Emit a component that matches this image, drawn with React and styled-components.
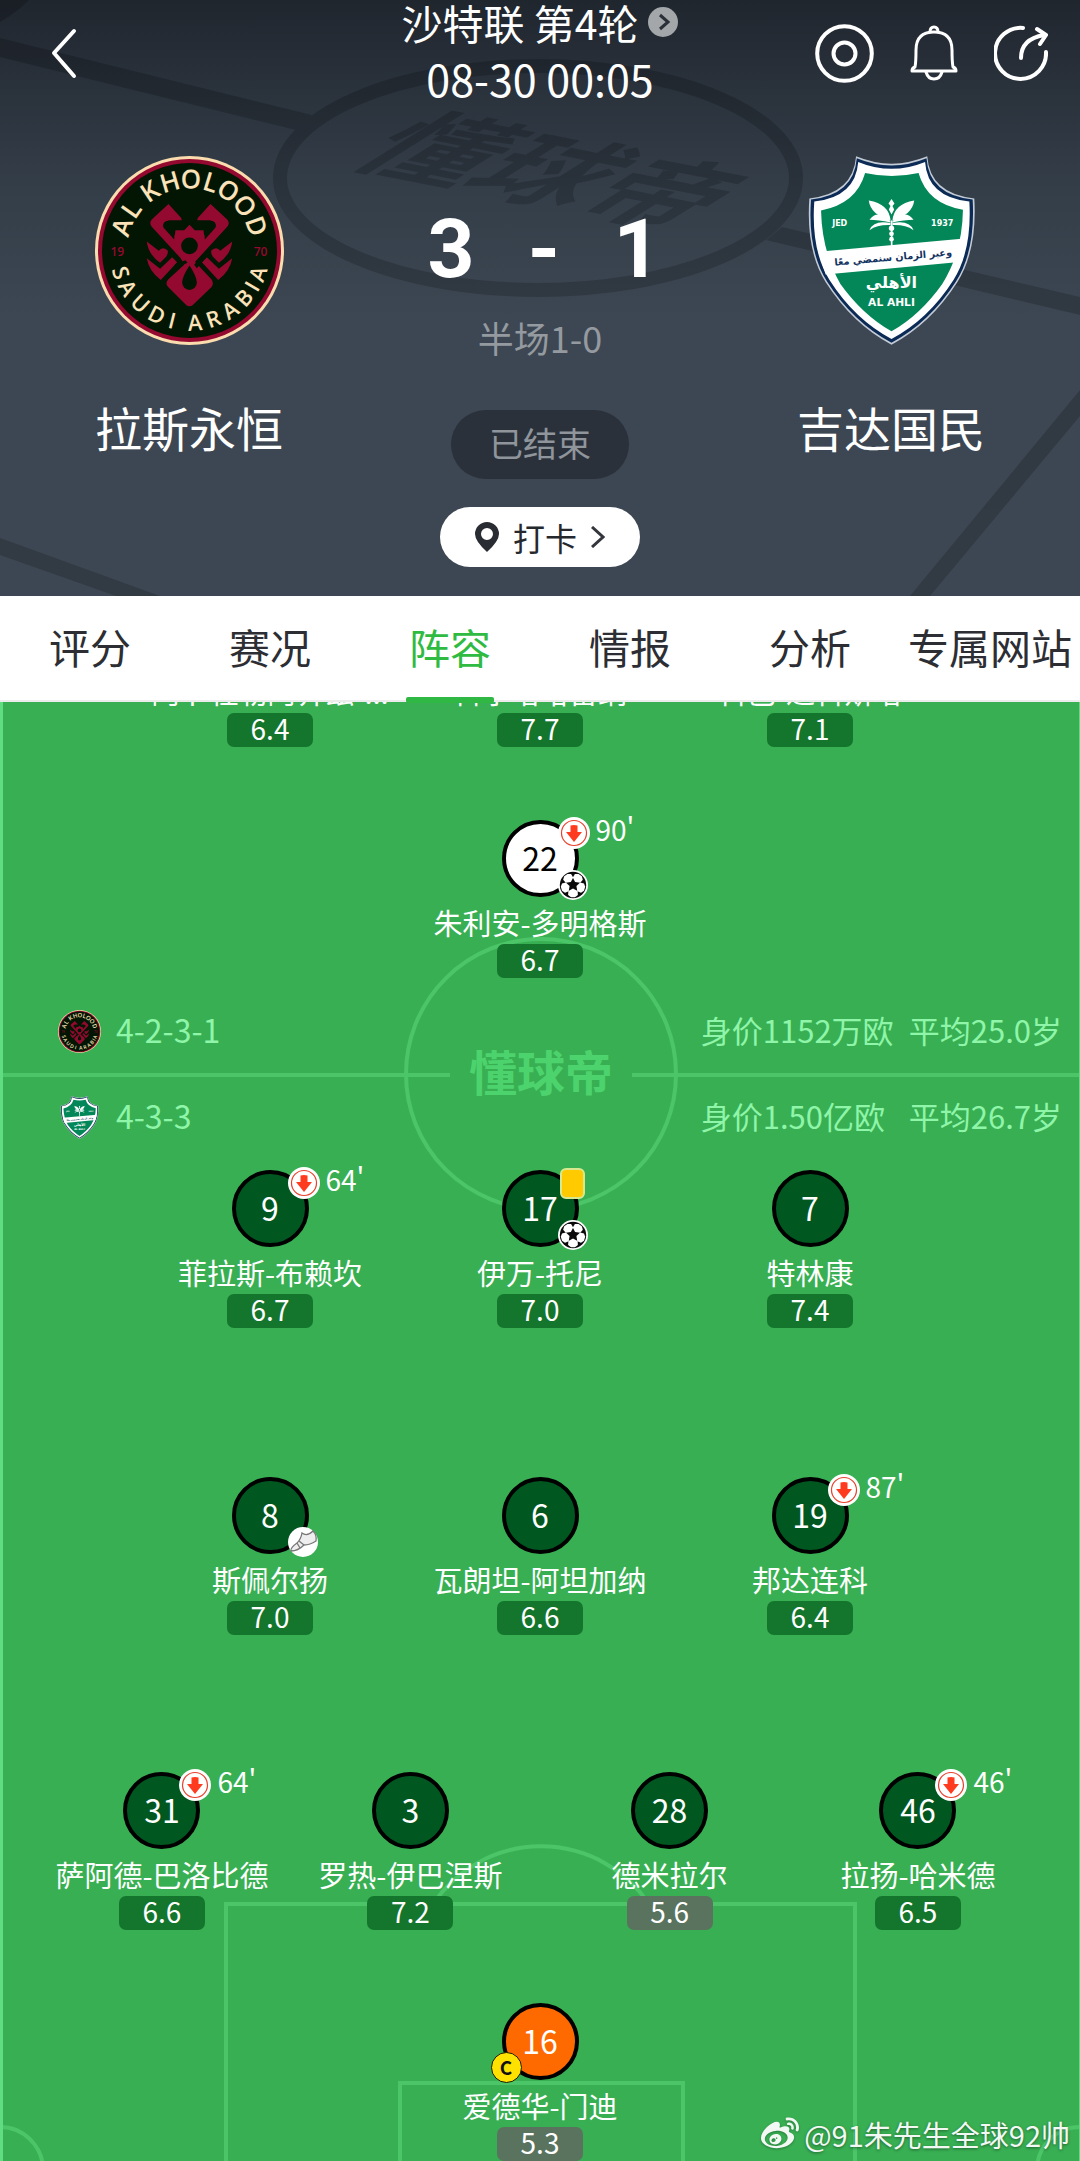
import React from 'react';
import styled, { createGlobalStyle } from 'styled-components';
import { FaWeibo } from 'react-icons/fa';

const GlobalStyle = createGlobalStyle`
  *, *::before, *::after { box-sizing: border-box; }
  body {
    margin: 0;
    background: #38af53;
    font-family: "Noto Sans CJK SC", sans-serif;
    -webkit-font-smoothing: antialiased;
  }
  h1, h2, p { margin: 0; font-weight: 400; }
  button {
    margin: 0;
    padding: 0;
    border: 0;
    background: none;
    color: inherit;
    font: inherit;
    cursor: pointer;
  }
`;

const Screen = styled.div`
  min-height: 100vh;
  display: flex;
  flex-direction: column;
`;

/* ---------- header ---------- */

const Header = styled.header`
  position: relative;
  overflow: hidden;
  color: #fff;
  background: linear-gradient(#20262e 0, #2b333d 100px, #343e49 190px, #3d4753 320px);
`;

const Backdrop = styled.svg`
  position: absolute;
  inset: 0;
  width: 100%;
  height: 100%;
`;

const TopBar = styled.div`
  position: relative;
  display: grid;
  grid-template-columns: 1fr auto 1fr;
  align-items: start;
`;

const BarSide = styled.div`
  height: 106px;
  display: flex;
  align-items: center;
  justify-content: ${(p) => (p.$end ? 'flex-end' : 'flex-start')};
  gap: 36px;
  padding: 0 32px 0 48px;
`;

const IconButton = styled.button`
  display: flex;
  align-items: center;
  justify-content: center;
`;

const MatchMeta = styled.div`
  display: flex;
  flex-direction: column;
  align-items: center;
`;

const RoundButton = styled.button`
  display: flex;
  align-items: center;
  gap: 10px;
  font-size: 41px;
  line-height: 44px;
`;

const Kickoff = styled.p`
  font-size: 43px;
  line-height: 68px;
`;

const Scoreboard = styled.div`
  position: relative;
  display: grid;
  grid-template-columns: 35% 30% 35%;
`;

const Team = styled.div`
  display: flex;
  flex-direction: column;
  align-items: center;
  padding-top: 44px;
`;

const TeamName = styled.h2`
  margin-top: 52px;
  font-size: 47px;
  line-height: 60px;
`;

const Result = styled.div`
  display: flex;
  flex-direction: column;
  align-items: center;
  padding: 91px 0 29px;
`;

const Score = styled.p`
  display: grid;
  grid-template-columns: repeat(3, 93px);
  justify-items: center;
  padding-left: 8px;
  font-family: Roboto, "Noto Sans CJK SC", sans-serif;
  font-size: 82px;
  line-height: 92px;
  font-weight: 700;
`;

const HalfTime = styled.p`
  margin-top: 18px;
  font-size: 36px;
  line-height: 48px;
  color: #949a9f;
`;

const Status = styled.span`
  margin-top: 49px;
  padding: 0 38px 4px;
  border-radius: 35px;
  background: #2a313b;
  color: #8f959b;
  font-size: 34px;
  line-height: 65px;
`;

const CheckIn = styled.button`
  height: 60px;
  margin-top: 28px;
  padding: 0 35px;
  display: flex;
  align-items: center;
  gap: 14px;
  border-radius: 30px;
  background: #fff;
  color: #25282d;
  font-size: 32px;
  line-height: 56px;
`;

/* ---------- tabs ---------- */

const Tabs = styled.nav`
  position: relative;
  z-index: 1;
  display: grid;
  grid-template-columns: repeat(6, 1fr);
  background: #fff;
  border-bottom: 2px solid #ececec;
`;

const Tab = styled.button`
  position: relative;
  padding: 20px 0 24px;
  font-size: 41px;
  line-height: 60px;
  white-space: nowrap;
  color: ${(p) => (p.$active ? '#2fbb42' : '#2c2e33')};

  &::after {
    content: '';
    display: ${(p) => (p.$active ? 'block' : 'none')};
    position: absolute;
    left: 50%;
    bottom: -3px;
    width: 88px;
    height: 6px;
    margin-left: -44px;
    border-radius: 2px;
    background: #2fb944;
  }
`;

/* ---------- pitch ---------- */

const Pitch = styled.main`
  position: relative;
  flex: 1;
  display: flex;
  flex-direction: column;
  overflow: hidden;
  background: #38af53;
  color: #fff;
`;

const Markings = styled.svg`
  position: absolute;
  inset: 0;
  width: 100%;
  height: 100%;
`;

const Line = styled.section`
  position: relative;
  display: grid;
  grid-template-columns: repeat(${(p) => p.$count}, ${(p) => (p.$count === 2 ? '46%' : '25%')});
  column-gap: ${(p) => (p.$count === 2 ? '1%' : '0')};
  justify-content: center;
  margin-top: ${(p) => p.$gap}px;
`;

const Flank = styled.div`
  display: grid;
  grid-template-columns: 1fr 1fr;
`;

const PlayerBox = styled.div`
  display: flex;
  flex-direction: column;
  align-items: center;
`;

const kits = {
  home: ['#ffffff', '#000000'],
  away: ['#005720', '#ffffff'],
  keeper: ['#ff6a00', '#ffffff'],
};

const Shirt = styled.div`
  position: relative;
  width: 77px;
  height: 77px;
  margin-bottom: 8px;
  padding-bottom: 4px;
  display: flex;
  align-items: center;
  justify-content: center;
  border: 4px solid #000;
  border-radius: 50%;
  background: ${(p) => kits[p.$kit][0]};
  color: ${(p) => kits[p.$kit][1]};
  font-size: 32px;
  line-height: 40px;
`;

const corners = {
  topRight: 'left: 52px; top: -7px;',
  bottomRight: 'left: 52px; top: 46px;',
  bottomLeft: 'left: -15px; top: 45px;',
};

const Badge = styled.span`
  position: absolute;
  ${(p) => corners[p.$corner]}
  display: flex;
  align-items: center;
  gap: 6px;
  color: #fff;
  white-space: nowrap;
`;

const Minute = styled.span`
  font-size: 28px;
  line-height: 24px;
  padding-bottom: 8px;
`;

const Card = styled.span`
  width: 25px;
  height: 31px;
  margin: 1px 2px;
  border: 2px solid #d9e88f;
  border-radius: 6px;
  background: #ffcb00;
`;

const Captain = styled.span`
  width: 31px;
  height: 31px;
  border: 1px solid #1c1c00;
  border-radius: 50%;
  background: #ffe100;
  color: #111;
  font: 700 19px/28px "Noto Sans CJK SC", sans-serif;
  text-align: center;
`;

const PlayerName = styled.p`
  font-size: 29px;
  line-height: 34px;
  white-space: nowrap;
`;

const Rating = styled.span`
  width: 86px;
  margin-top: 5px;
  padding-bottom: 4px;
  border-radius: 7px;
  background: ${(p) => (p.$low ? '#59735e' : '#14752c')};
  font-size: 28px;
  line-height: 30px;
  text-align: center;
`;

const SquadInfo = styled.div`
  position: relative;
  display: flex;
  align-items: center;
  height: 43px;
  margin-top: ${(p) => p.$gap}px;
  padding: 0 18px 0 58px;
  color: #8ff5a9;
  font-size: 31px;
  line-height: 39px;
  white-space: nowrap;
`;

const Formation = styled.span`
  flex: 1;
  padding: 0 0 4px 15px;
  font-size: 32px;
`;

const SquadValue = styled.span`
  width: 208px;
  padding-bottom: 4px;
`;

const SquadAge = styled.span`
  padding-bottom: 4px;
`;

const Signature = styled.div`
  position: absolute;
  right: 10px;
  bottom: 7px;
  display: flex;
  align-items: center;
  gap: 5px;
  font-size: 29px;
  line-height: 40px;
  color: #f2f8f3;
  text-shadow: 0 1px 3px rgba(0, 0, 0, 0.45);

  svg { filter: drop-shadow(0 1px 1px rgba(0, 0, 0, 0.3)); }
`;

/* ---------- drawings ---------- */

const advance = { A: 0.63, L: 0.52, K: 0.61, H: 0.74, O: 0.78, D: 0.73, S: 0.55, U: 0.73, I: 0.28, R: 0.62, B: 0.65, ' ': 0.26 };

// Sets each letter on a ring round (328, 331); angles are degrees from the vertical.
function RingText({ text, angles, radius, size, below }) {
  const xs = [];
  const ys = [];
  const turns = [];
  [...text].forEach((ch, i) => {
    const a = (angles[i] * Math.PI) / 180;
    const half = (advance[ch] * size) / 2;
    const turn = below ? -a : a;
    xs.push(328 + radius * Math.sin(a) - half * Math.cos(turn));
    ys.push(331 + (below ? 1 : -1) * radius * Math.cos(a) - half * Math.sin(turn));
    turns.push((turn * 180) / Math.PI);
  });
  return (
    <text x={xs.join(' ')} y={ys.join(' ')} rotate={turns.join(' ')} fontSize={size} fill="#fbe2b8" fontFamily="Open Sans, sans-serif" fontWeight="600">
      {text}
    </text>
  );
}

const KholoodHalf = () => (
  <g>
    <path d="M265 192 L215 238 Q206 248 215 260 L318 372 L345 345 L290 290 L252 262 Q244 244 268 241 H304 Q306 238 302 232 Z" />
    <path d="M200 304 L236 332 Q246 318 262 330 Q266 338 258 350 L240 368 Q204 342 200 304 Z" />
    <path d="M200 354 L240 386 L276 351 L291 366 L242 419 Q206 392 200 354 Z" />
  </g>
);

function KholoodCrest({ size }) {
  return (
    <svg width={size} height={size} viewBox="45 48 566 566" role="img" aria-label="拉斯永恒">
      <circle cx="328" cy="331" r="283" fill="#fbdcae" />
      <circle cx="328" cy="331" r="274" fill="#93092f" />
      <circle cx="328" cy="331" r="262" fill="#031604" />
      <RingText text="AL KHOLOOD" angles={[-71, -55, -46, -34, -16, 1, 17, 33, 51, 70]} radius={186} size={78} />
      <RingText text="SAUDI ARABIA" angles={[-72, -59, -43, -27, -14, -5, 4, 19, 34, 49, 60, 71]} radius={240} size={66} below />
      <g fill="#93092f">
        <g fontFamily="Open Sans, sans-serif" fontSize="36" fontWeight="600" textAnchor="middle">
          <text x="112" y="348">19</text>
          <text x="541" y="348">70</text>
        </g>
        <KholoodHalf />
        <g transform="translate(656 0) scale(-1 1)"><KholoodHalf /></g>
        <path d="M328 254 L344 270 H370 L374 300 L350 350 L340 360 L394 418 Q402 430 394 440 L338 494 Q328 502 318 494 L264 440 Q254 430 264 418 L312 374 L290 330 L282 300 L286 270 H312 Z" />
      </g>
      <g fill="#031604">
        <circle cx="328" cy="317" r="25" />
        <path d="M328 376 Q350 410 350 427 A22 22 0 0 1 306 427 Q306 410 328 376 Z" />
        <path d="M250 262 Q246 243 268 241 H312 L322 252 L310 268 H284 L282 298 Z" />
        <path d="M406 262 Q410 243 388 241 H344 L334 252 L346 268 H372 L374 298 Z" />
        <path d="M342 374 L382 330 L390 338 L350 384 Z" />
        <path d="M290 384 L322 368 L316 360 L284 372 Z" />
      </g>
    </svg>
  );
}

const PalmHalf = () => (
  <g>
    <path d="M300 240 Q296 190 235 180 Q240 222 300 240 Z" />
    <path d="M300 242 Q262 204 237 238 Q264 238 300 246 Z" />
    <path d="M300 248 Q250 238 237 269 Q262 252 300 254 Z" />
  </g>
);

function AhliCrest({ size }) {
  const shield = 'M197 48 Q303 92 410 48 Q418 160 551 174 Q560 330 500 425 Q420 550 303 612 Q186 550 106 425 Q46 330 57 174 Q188 160 197 48 Z';
  return (
    <svg width={size} height={size} viewBox="20 47 566 566" role="img" aria-label="吉达国民">
      <path d={shield} fill="#c3ccd6" />
      <path d={shield} fill="#0b2a55" transform="translate(303 328) scale(.98) translate(-303 -328)" />
      <path d={shield} fill="#fff" transform="translate(303 328) scale(.94) translate(-303 -328)" />
      <path d="M224 98 Q303 116 384 98 Q410 190 517 208 Q515 335 455 430 Q390 522 303 572 Q216 522 150 430 Q95 335 92 210 Q198 190 224 98 Z" fill="#038759" />
      <path d="M84 334 L530 293 L514 364 L106 402 Z" fill="#fff" />
      <g fill="#fff">
        <PalmHalf />
        <g transform="translate(606 0) scale(-1 1)"><PalmHalf /></g>
        <path d="M303 176 L312 189 L306 197 L311 207 L303 222 L295 207 L300 197 L294 189 Z" />
        <rect x="301" y="240" width="5" height="76" />
        <circle cx="303" cy="263" r="8" />
        <circle cx="303" cy="280" r="7" />
        <circle cx="303" cy="296" r="7" />
      </g>
      <g textAnchor="middle" fill="#fff" fontFamily="DejaVu Sans, sans-serif" fontWeight="700">
        <text x="148" y="257" fontSize="24">JED</text>
        <text x="455" y="257" fontSize="24">1937</text>
        <text x="308" y="360" fontSize="29" fill="#123262" transform="rotate(-5 308 350)">وعبر الزمان سنمضي معًا</text>
        <text x="303" y="442" fontSize="48">الأهلي</text>
        <text x="303" y="496" fontSize="32">AL AHLI</text>
      </g>
    </svg>
  );
}

const SubOff = () => (
  <svg width="32" height="32" viewBox="0 0 32 32">
    <circle cx="16" cy="16" r="16" fill="#fff" />
    <circle cx="16" cy="16" r="12.5" fill="none" stroke="#e8402c" strokeWidth="1.2" />
    <path d="M12.5 8.5 Q16 7.5 19.5 8.5 V15 H24 L16 25 L8 15 H12.5 Z" fill="#ff3b1f" />
  </svg>
);

const Ball = () => (
  <svg width="30" height="30" viewBox="-15 -15 30 30">
    <circle r="15" fill="#fff" />
    <circle r="13.2" fill="#0a0a0a" />
    {[36, 108, 180, 252, 324].map((turn) => (
      <path key={turn} d="M0 -3.6 L4.6 -6 L4.9 -10 L2 -12.2 H-2 L-4.9 -10 L-4.6 -6 Z" fill="#fff" transform={`rotate(${turn})`} />
    ))}
  </svg>
);

const Boot = () => (
  <svg width="30" height="30" viewBox="0 0 30 30">
    <circle cx="15" cy="15" r="15" fill="#fff" />
    <path d="M14 6 Q19 10 25 4 Q29 8 28 14 Q22 18 16 18 Q10 24 3 24 Q2 21 9 16 Q13 12 14 6 Z M9 16 L12 21 M11 14 L16 18" fill="#eee" stroke="#777" strokeWidth="1.3" />
  </svg>
);

const badges = {
  off: { corner: 'topRight', view: SubOff },
  card: { corner: 'topRight', view: Card },
  goal: { corner: 'bottomRight', view: Ball },
  assist: { corner: 'bottomRight', view: Boot },
};

function Player({ number, name, rating, kit = 'away', marks = [], minute, captain }) {
  return (
    <PlayerBox>
      {number && (
        <Shirt $kit={kit}>
          {number}
          {marks.map((mark) => {
            const { corner, view: View } = badges[mark];
            return (
              <Badge key={mark} $corner={corner}>
                <View />
                {mark === 'off' && <Minute>{minute}'</Minute>}
              </Badge>
            );
          })}
          {captain && <Badge $corner="bottomLeft"><Captain>C</Captain></Badge>}
        </Shirt>
      )}
      <PlayerName>{name}</PlayerName>
      <Rating $low={Number(rating) < 6}>{rating}</Rating>
    </PlayerBox>
  );
}

const tabs = ['评分', '赛况', '阵容', '情报', '分析', '专属网站'];

// The list is scrolled so that only the foot of this line shows below the tabs.
const homeMidfield = [
  { name: '阿卜杜勒阿齐兹-...', rating: '6.4' },
  { name: '科尔塔哈雷纳', rating: '7.7' },
  { name: '科巴-达科斯塔', rating: '7.1' },
];
const homeStriker = [
  { number: 22, name: '朱利安-多明格斯', rating: '6.7', kit: 'home', marks: ['off', 'goal'], minute: 90 },
];
const awayForwards = [
  { number: 9, name: '菲拉斯-布赖坎', rating: '6.7', marks: ['off'], minute: 64 },
  { number: 17, name: '伊万-托尼', rating: '7.0', marks: ['card', 'goal'] },
  { number: 7, name: '特林康', rating: '7.4' },
];
const awayMidfield = [
  { number: 8, name: '斯佩尔扬', rating: '7.0', marks: ['assist'] },
  { number: 6, name: '瓦朗坦-阿坦加纳', rating: '6.6' },
  { number: 19, name: '邦达连科', rating: '6.4', marks: ['off'], minute: 87 },
];
const awayDefence = [
  [
    { number: 31, name: '萨阿德-巴洛比德', rating: '6.6', marks: ['off'], minute: 64 },
    { number: 3, name: '罗热-伊巴涅斯', rating: '7.2' },
  ],
  [
    { number: 28, name: '德米拉尔', rating: '5.6' },
    { number: 46, name: '拉扬-哈米德', rating: '6.5', marks: ['off'], minute: 46 },
  ],
];
const awayKeeper = [{ number: 16, name: '爱德华-门迪', rating: '5.3', kit: 'keeper', captain: true }];

const PlayerLine = ({ players, gap }) => (
  <Line $count={players.length} $gap={gap}>
    {players.map((p) => <Player key={p.name} {...p} />)}
  </Line>
);

export default function App() {
  return (
    <Screen lang="zh-CN">
      <GlobalStyle />
      <Header>
        <Backdrop viewBox="0 0 1080 596" preserveAspectRatio="xMidYMid slice" aria-hidden="true">
          <g fill="#000" opacity="0.18">
            <path d="M0 0 H29 Q16 13 0 22 Z" />
            <path d="M0 38 L312 115 L296 130 L0 57 Z" />
            <path d="M782 227 L1080 297 V315 L766 240 Z" />
            <path d="M0 538 L160 596 H116 L0 555 Z" />
            <path d="M1080 390 L910 596 H930 L1080 416 Z" />
            <ellipse cx="538" cy="178" rx="258" ry="112" fill="none" stroke="#000" strokeWidth="14" />
            <text transform="matrix(1.12 .22 -1.05 .66 345 163)" fontSize="100" fontWeight="700">懂球帝</text>
          </g>
        </Backdrop>

        <TopBar>
          <BarSide>
            <IconButton aria-label="返回">
              <svg width="32" height="52" viewBox="0 0 32 52" fill="none" stroke="#fff" strokeWidth="4" strokeLinecap="round" strokeLinejoin="round">
                <path d="M26 4 L6 26 L26 49" />
              </svg>
            </IconButton>
          </BarSide>
          <MatchMeta>
            <RoundButton>
              沙特联 第4轮
              <svg width="30" height="30" viewBox="0 0 30 30">
                <circle cx="15" cy="15" r="15" fill="#a4a7aa" />
                <path d="M12 8 L20 15 L12 22" fill="none" stroke="#2a3038" strokeWidth="3" />
              </svg>
            </RoundButton>
            <Kickoff>08-30 00:05</Kickoff>
          </MatchMeta>
          <BarSide $end>
            <IconButton aria-label="直播">
              <svg width="59" height="59" viewBox="0 0 59 59" fill="none" stroke="#fff" strokeWidth="4">
                <circle cx="29.5" cy="29.5" r="27.3" />
                <circle cx="29.5" cy="29.5" r="11" />
              </svg>
            </IconButton>
            <IconButton aria-label="提醒">
              <svg width="48" height="56" viewBox="3 0 48 56" fill="none" stroke="#fff" strokeWidth="3" strokeLinecap="round" strokeLinejoin="round">
                <path d="M8 42 Q9 37 9 25 Q9 7 27 7 Q45 7 45 25 Q45 37 46 42 Q49 43 49 46 H5 Q5 43 8 42 Z" />
                <path d="M23 7 Q23 2 27 2 Q31 2 31 7 M19 47 Q21 54 27 54 Q33 54 35 47" />
              </svg>
            </IconButton>
            <IconButton aria-label="分享">
              <svg width="54" height="56" viewBox="0 0 54 56" fill="none" stroke="#fff" strokeWidth="4" strokeLinecap="round" strokeLinejoin="round">
                <path d="M29 3 A25.5 25.5 0 1 0 52 27" />
                <path d="M27 33 Q27 14 50 10" />
                <path d="M43 4 L52 10 L46 19" />
              </svg>
            </IconButton>
          </BarSide>
        </TopBar>

        <Scoreboard>
          <Team>
            <KholoodCrest size={189} />
            <TeamName>拉斯永恒</TeamName>
          </Team>
          <Result>
            <Score><span>3</span><span>-</span><span>1</span></Score>
            <HalfTime>半场1-0</HalfTime>
            <Status>已结束</Status>
            <CheckIn>
              <svg width="24" height="30" viewBox="0 0 24 30">
                <path d="M12 0 A12 12 0 0 1 24 12 Q24 19 12 30 Q0 19 0 12 A12 12 0 0 1 12 0 Z M12 6 A6 6 0 1 0 12 18 A6 6 0 1 0 12 6 Z" fill="#292c33" fillRule="evenodd" />
              </svg>
              打卡
              <svg width="14" height="22" viewBox="0 0 14 22">
                <path d="M1 1 L12 11 L1 21" fill="none" stroke="#33363c" strokeWidth="3" />
              </svg>
            </CheckIn>
          </Result>
          <Team>
            <AhliCrest size={189} />
            <TeamName>吉达国民</TeamName>
          </Team>
        </Scoreboard>
      </Header>

      <Tabs>
        {tabs.map((tab) => (
          <Tab key={tab} $active={tab === '阵容'}>{tab}</Tab>
        ))}
      </Tabs>

      <Pitch>
        <Markings viewBox="0 0 1080 1459" preserveAspectRatio="xMidYMin slice" aria-hidden="true">
          <g fill="none" stroke="#4cc569" strokeWidth="4">
            <path d="M0 373 H450 M632 373 H1080" />
            <circle cx="541" cy="372" r="135" />
            <path d="M226 1470 V1202 H855 V1470" />
            <path d="M400 1470 V1381 H683 V1470" />
            <path d="M433 1202 A130 130 0 0 1 649 1202" />
            <circle cx="0" cy="1468" r="43" />
            <circle cx="1080" cy="1468" r="43" />
          </g>
          <rect width="3" height="1459" fill="#60dc82" />
          <rect x="1079" width="1" height="1459" fill="#60dc82" />
          <text x="541" y="389" textAnchor="middle" fontSize="48" fontWeight="700" fill="#4dd36d">懂球帝</text>
        </Markings>

        <PlayerLine players={homeMidfield} gap={-28} />
        <PlayerLine players={homeStriker} gap={73} />
        <SquadInfo $gap={32}>
          <KholoodCrest size={43} />
          <Formation>4-2-3-1</Formation>
          <SquadValue>身价1152万欧</SquadValue>
          <SquadAge>平均25.0岁</SquadAge>
        </SquadInfo>
        <SquadInfo $gap={43}>
          <AhliCrest size={43} />
          <Formation>4-3-3</Formation>
          <SquadValue>身价1.50亿欧</SquadValue>
          <SquadAge>平均26.7岁</SquadAge>
        </SquadInfo>
        <PlayerLine players={awayForwards} gap={31} />
        <PlayerLine players={awayMidfield} gap={149} />
        <Line $count={2} $gap={137}>
          {awayDefence.map((pair) => (
            <Flank key={pair[0].number}>
              {pair.map((p) => <Player key={p.name} {...p} />)}
            </Flank>
          ))}
        </Line>
        <PlayerLine players={awayKeeper} gap={73} />

        <Signature>
          <FaWeibo size={38} />
          @91朱先生全球92帅
        </Signature>
      </Pitch>
    </Screen>
  );
}
